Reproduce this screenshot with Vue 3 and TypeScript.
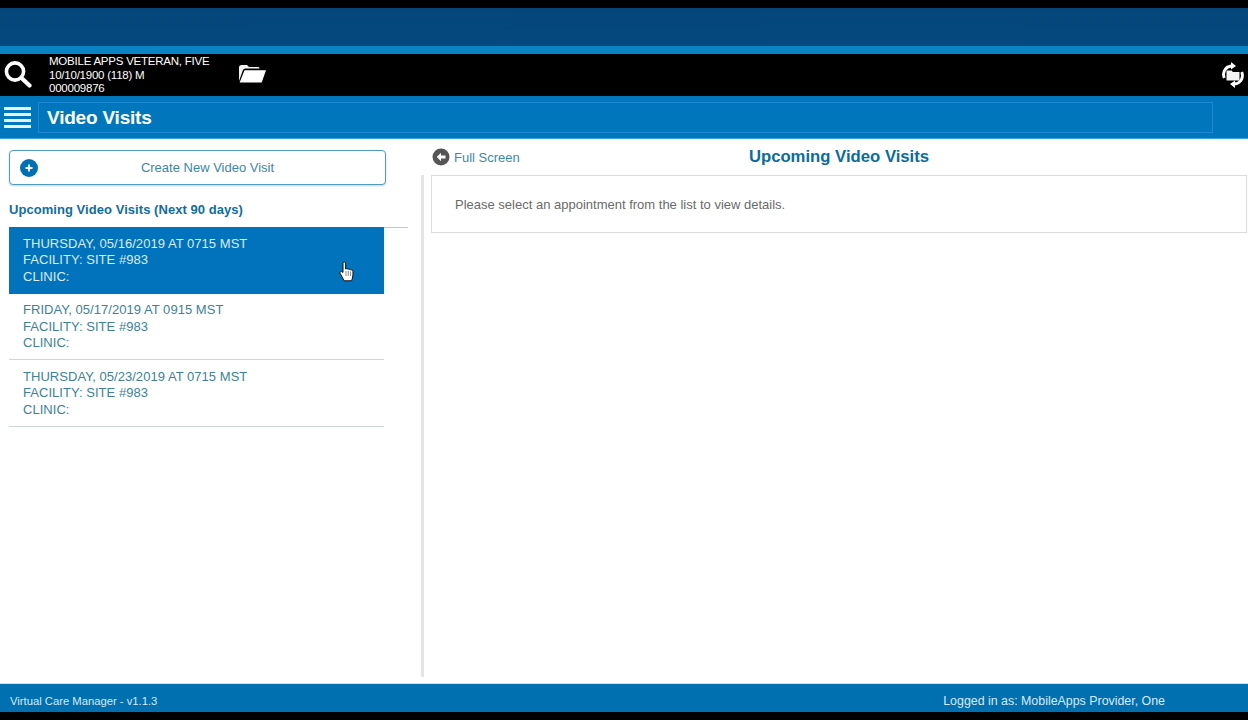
<template>
  <div class="page">
    <div class="top-band"></div>
    <header class="patient-bar">
      <svg class="search-icon" width="30" height="30" viewBox="0 0 30 30">
        <circle cx="13" cy="12.5" r="8.6" fill="none" stroke="#fff" stroke-width="3.6" />
        <path d="M19.5 19l8 7.6" stroke="#fff" stroke-width="4.2" stroke-linecap="round" />
      </svg>
      <div class="patient-info">
        <div>{{ patient.name }}</div>
        <div>{{ patient.dob }}</div>
        <div>{{ patient.id }}</div>
      </div>
      <svg class="folder-icon" width="30" height="24" viewBox="0 0 30 24">
        <path d="M2 20V6.500C2 5 3 4 4.500 4H10l2 2h9c1 0 1.500.6 1.500 1.500H8.500C7 7.500 6.200 8.200 5.800 9.500z" fill="#f2f2f2" />
        <path d="M7.500 9.300H29L24.700 21.500H2.600z" fill="#fff" />
      </svg>
      <svg class="switch-icon" width="24" height="28" viewBox="0 0 24 28">
        <path d="M3.200 17C1 11 4.500 5.500 10.500 5" fill="none" stroke="#fff" stroke-width="2.800" />
        <path d="M10 1l5 4-5 3.600z" fill="#fff" />
        <path d="M20.800 11C23 17 19.500 22.500 13.500 23" fill="none" stroke="#fff" stroke-width="2.800" />
        <path d="M14 19.400L9 23l5 4z" fill="#fff" />
        <path d="M5.500 9.500h5l1.500 1.500h6.500v8.500H5.500z" fill="#f4f4f4" />
      </svg>
    </header>
    <nav class="title-bar">
      <div class="menu-icon"><span></span><span></span><span></span><span></span></div>
      <div class="title-box">Video Visits</div>
    </nav>
    <main class="content">
      <section class="left-col">
        <button class="create-btn">
          <svg class="plus-icon" width="18" height="18" viewBox="0 0 18 18">
            <circle cx="9" cy="9" r="9" fill="#0070b5" />
            <path d="M9 5.500v7M5.500 9h7" stroke="#fff" stroke-width="1.800" />
          </svg>
          <span>Create New Video Visit</span>
        </button>
        <h2 class="list-heading">Upcoming Video Visits (Next 90 days)</h2>
        <ul class="visit-list">
          <li v-for="(visit, i) in visits" :key="visit" class="visit" :class="{ selected: i === 0 }">
            <div>{{ visit }}</div>
            <div>FACILITY: SITE #983</div>
            <div>CLINIC:</div>
            <svg v-if="i === 0" class="cursor" width="16" height="22" viewBox="0 0 16 22">
              <path d="M4 2.200c0-1.600 2.600-1.600 2.600 0V8c.9-.5 2-.4 2.500.3.900-.4 2-.2 2.400.6 1-.3 2.300.2 2.400 1.400.2 3 0 6-1.300 9.500H5.200L1.200 12.500c-.9-1.700 1-2.900 2.800-1z" fill="#fff" stroke="#111" stroke-width="1" />
              <path d="M7 10v5M9.300 10v5M11.600 10.500v4.500" stroke="#555" stroke-width=".7" />
            </svg>
          </li>
        </ul>
      </section>
      <section class="right-col">
        <div class="right-head">
          <a class="full-screen">
            <svg width="18" height="18" viewBox="0 0 18 18">
              <circle cx="9" cy="9" r="8.500" fill="#555" />
              <path d="M9 4.800L4.800 9 9 13.200V10.500h4.500v-3H9z" fill="#fff" />
            </svg>
            <span>Full Screen</span>
          </a>
          <h1 class="right-title">Upcoming Video Visits</h1>
        </div>
        <div class="detail-box">Please select an appointment from the list to view details.</div>
      </section>
    </main>
    <footer class="footer">
      <span class="version">Virtual Care Manager - v1.1.3</span>
      <span class="logged-in">Logged in as: MobileApps Provider, One</span>
    </footer>
    <div class="bottom-band"></div>
  </div>
</template>

<script setup lang="ts">
const patient = {
  name: 'MOBILE APPS VETERAN, FIVE',
  dob: '10/10/1900 (118) M',
  id: '000009876',
};

const visits: string[] = [
  'THURSDAY, 05/16/2019 AT 0715 MST',
  'FRIDAY, 05/17/2019 AT 0915 MST',
  'THURSDAY, 05/23/2019 AT 0715 MST',
];
</script>

<style>
html,
body {
  margin: 0;
  background: #000;
}
</style>

<style scoped>
.page {
  width: 1248px;
  height: 720px;
  display: flex;
  flex-direction: column;
  overflow: hidden;
  background: #000;
  font-family: "Liberation Sans", Arial, sans-serif;
}

.top-band {
  height: 38px;
  margin-top: 8px;
  background: linear-gradient(#05467a, #04497f);
  border-bottom: 8px solid #0a83c4;
}

.patient-bar {
  height: 42px;
  display: flex;
  align-items: center;
  background: #000;
  color: #fff;
  padding: 0 0 0 2px;
}

.search-icon {
  flex: none;
  width: 30px;
  height: 30px;
  margin-top: -2px;
}

.patient-info {
  margin-left: 17px;
  margin-top: 1px;
  width: 188px;
  font-size: 11.500px;
  line-height: 13.500px;
  letter-spacing: -0.230px;
}

.folder-icon {
  flex: none;
  margin-top: -4px;
}

.switch-icon {
  flex: none;
  margin-left: auto;
  margin-right: 3px;
  margin-top: -1px;
}

.title-bar {
  height: 43px;
  box-sizing: border-box;
  padding: 6px 35px 5px 4px;
  display: flex;
  align-items: stretch;
  background: #0077bd;
  border-bottom: 1px solid #38a7de;
}

.menu-icon {
  width: 27px;
  flex: none;
  margin-right: 7px;
  display: flex;
  flex-direction: column;
  justify-content: center;
  gap: 3px;
}

.menu-icon span {
  height: 3px;
  background: #e6f3fa;
}

.title-box {
  flex: 1;
  box-sizing: border-box;
  padding-left: 8px;
  border: 1px solid #2086d6;
  color: #fff;
  font-size: 19px;
  font-weight: 700;
  line-height: 30px;
  letter-spacing: -0.200px;
}

.content {
  flex: 1;
  display: flex;
  background: #fff;
  border-bottom: 1px solid #cfdfe8;
}

.left-col {
  width: 421px;
  flex: none;
  box-sizing: border-box;
  padding: 11px 13px 0 9px;
}

.create-btn {
  width: 377px;
  height: 35px;
  display: flex;
  align-items: center;
  padding: 0 0 0 10px;
  background: #fff;
  border: 1px solid #4f9dbb;
  border-radius: 4px;
  box-shadow: 0 1px 2px rgba(0, 90, 130, 0.25);
  color: #3a87aa;
  font-family: inherit;
  font-size: 13px;
}

.create-btn span {
  flex: 1;
  text-align: center;
  padding-right: 8px;
}

.plus-icon {
  flex: none;
}

.list-heading {
  margin: 17px 0 0;
  height: 25px;
  width: 399px;
  color: #0f6d9f;
  font-size: 13px;
  font-weight: 700;
  line-height: 16px;
  letter-spacing: 0.050px;
  border-bottom: 1px solid #b9c8d0;
}

.visit-list {
  list-style: none;
  margin: -1px 0 0;
  padding: 0;
  width: 375px;
}

.visit {
  position: relative;
  box-sizing: border-box;
  height: 66.500px;
  padding: 8.500px 14px 0;
  color: #3d8298;
  font-size: 13px;
  line-height: 16.500px;
  letter-spacing: 0.040px;
  border-bottom: 1px solid #cfd4d6;
}

.visit.selected {
  background: #0073bc;
  color: #dcecf5;
  border-bottom: none;
}

.cursor {
  position: absolute;
  left: 330px;
  top: 34px;
}

.right-col {
  flex: 1;
  min-width: 0;
  position: relative;
  box-sizing: border-box;
  padding: 8px 1px 0 10px;
}

.right-col::before {
  content: "";
  position: absolute;
  left: 0;
  top: 36px;
  bottom: 6px;
  width: 3px;
  background: #e4e4e4;
}

.right-head {
  height: 20px;
  margin-bottom: 8px;
  display: flex;
  align-items: center;
  position: relative;
  padding-left: 1px;
}

.full-screen {
  display: flex;
  align-items: center;
  gap: 4px;
  color: #3a8ba8;
  font-size: 13px;
}

.right-title {
  position: absolute;
  left: 0;
  right: 0;
  margin: 0;
  text-align: center;
  color: #0a6c9e;
  font-size: 16.700px;
  font-weight: 700;
  pointer-events: none;
}

.detail-box {
  height: 58px;
  box-sizing: border-box;
  padding: 21px 23px 0;
  border: 1px solid #dcdcdc;
  color: #6a6a6a;
  font-size: 13px;
  line-height: 16px;
}

.footer {
  height: 28px;
  flex: none;
  display: flex;
  align-items: center;
  background: #0070b0;
  color: #d8eaf5;
  padding: 5px 83px 0 10px;
  box-sizing: border-box;
}

.version {
  font-size: 11.250px;
}

.logged-in {
  margin-left: auto;
  font-size: 12.400px;
}

.bottom-band {
  height: 8px;
  flex: none;
  background: #000;
}
</style>
